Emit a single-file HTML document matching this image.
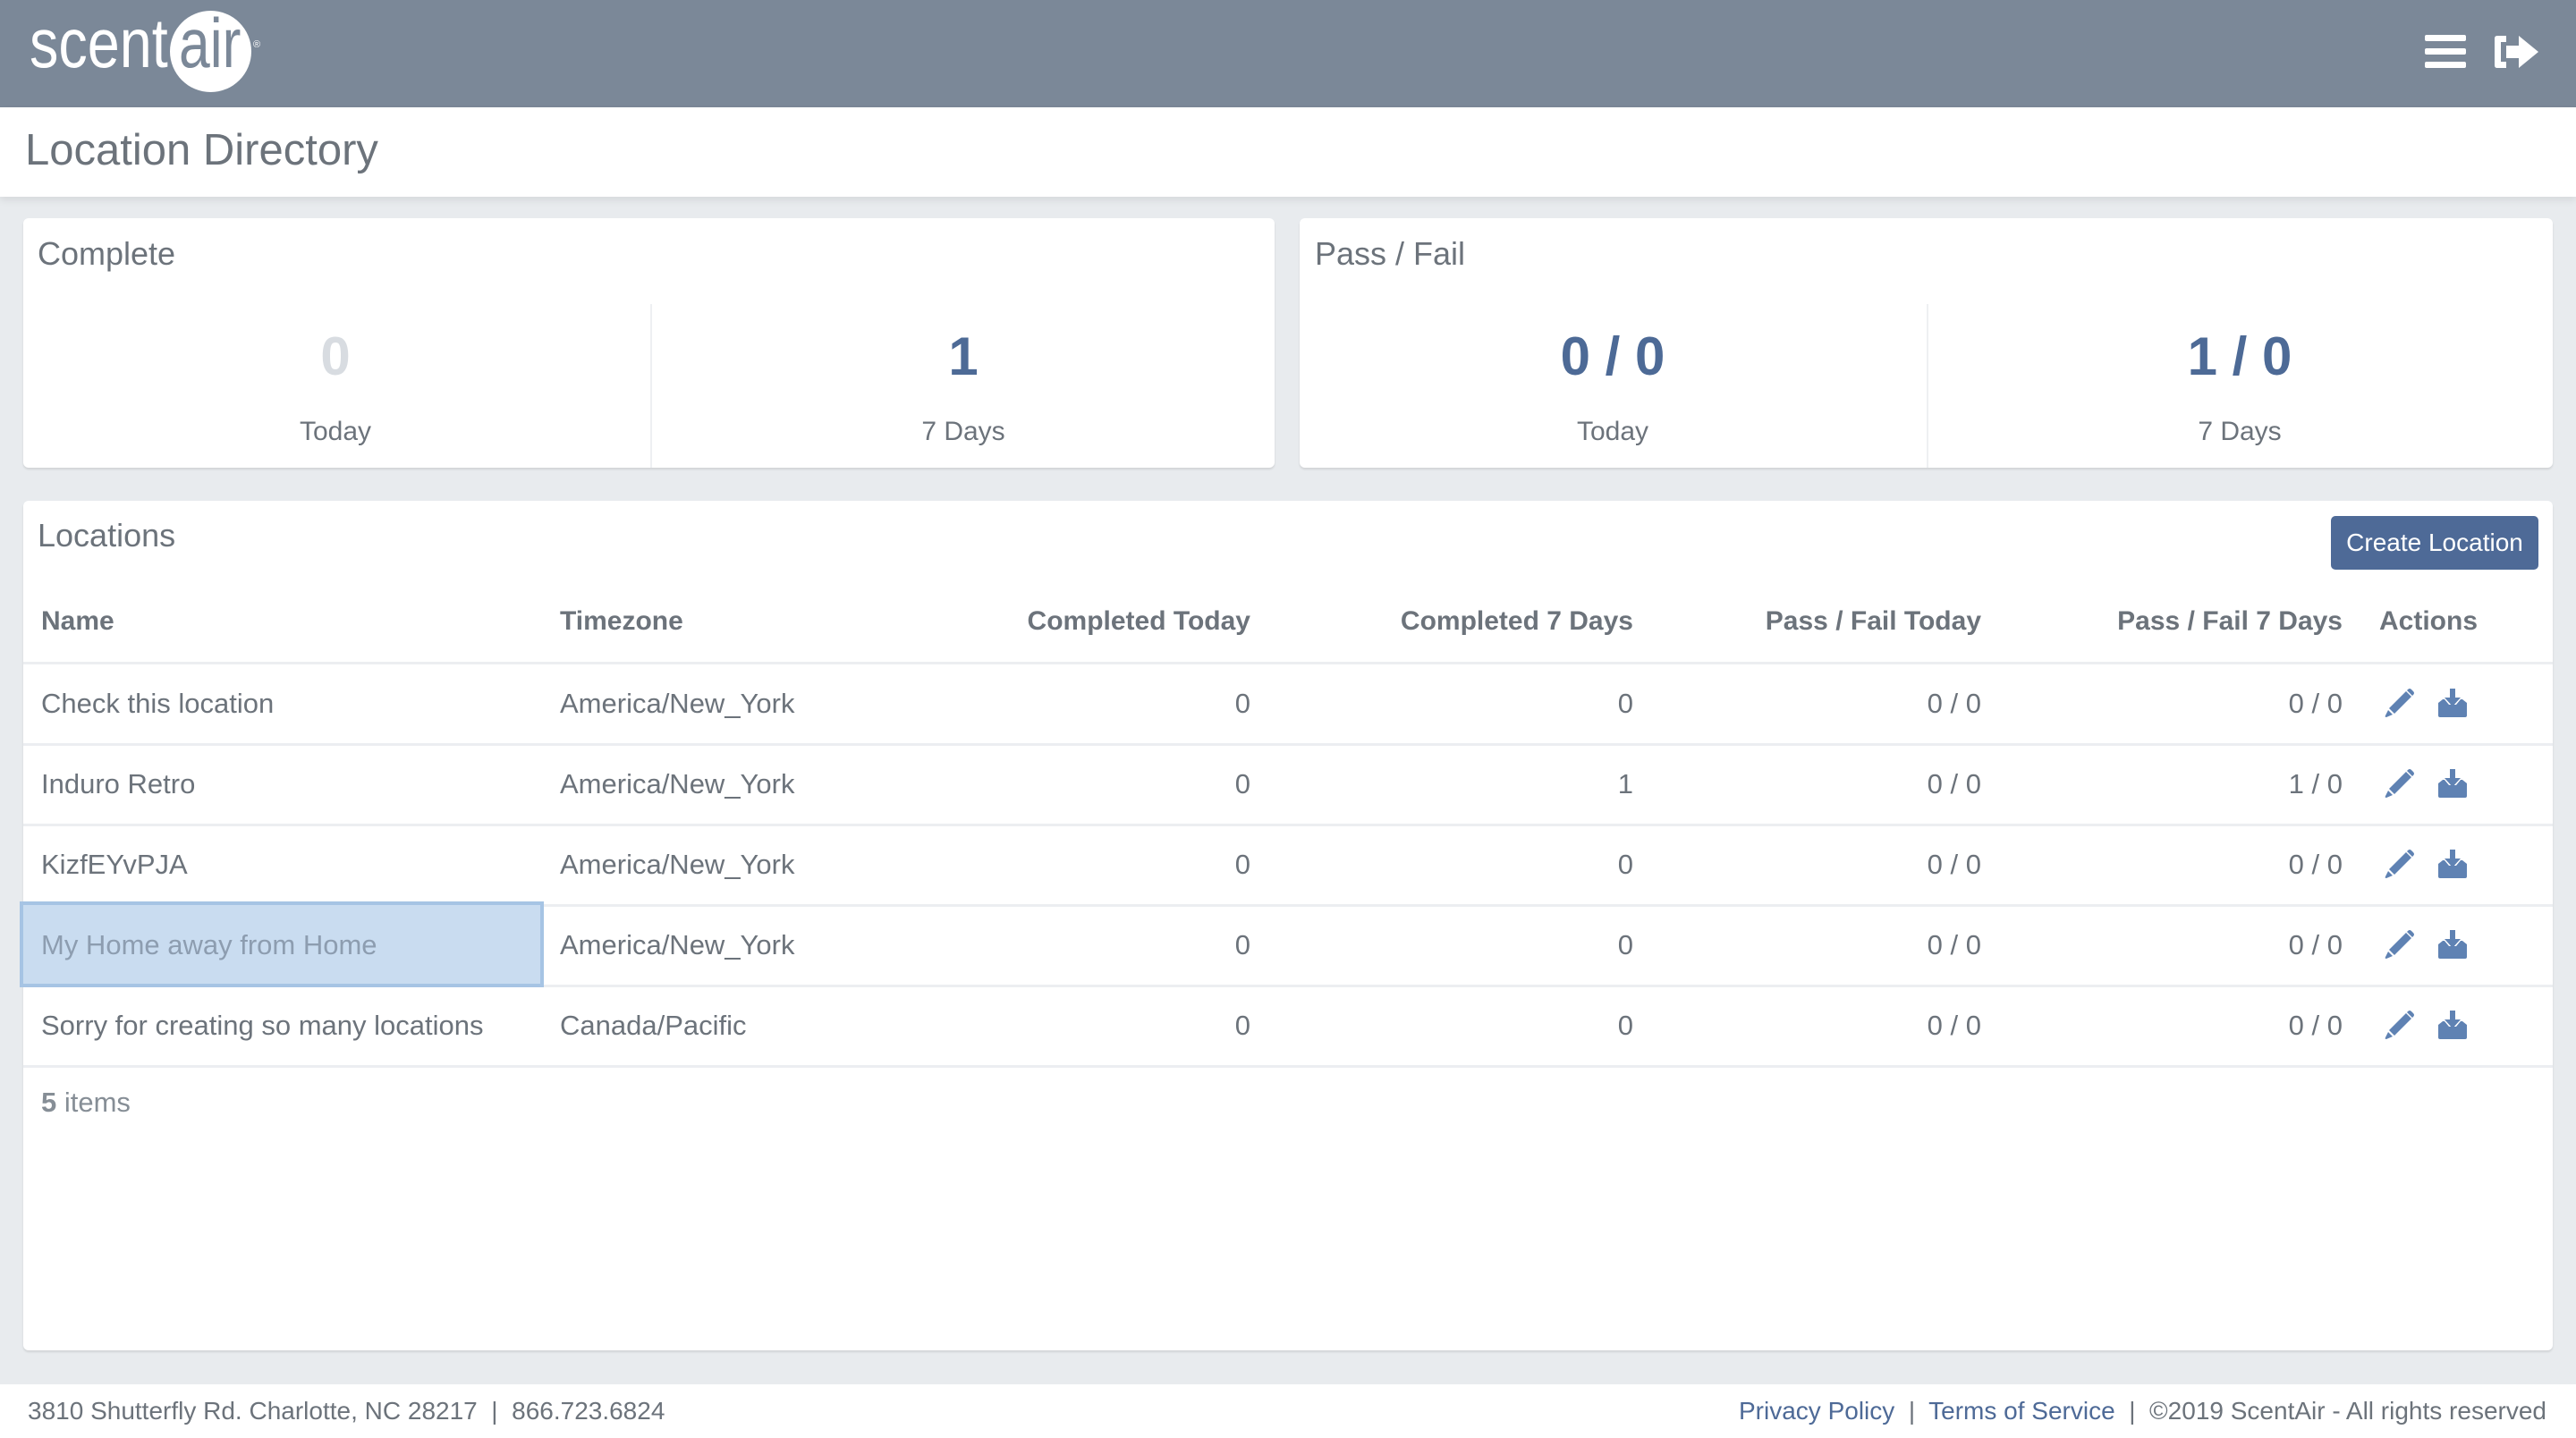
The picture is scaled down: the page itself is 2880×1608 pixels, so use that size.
<!DOCTYPE html>
<html><head><meta charset="utf-8"><style>
*{margin:0;padding:0;box-sizing:border-box}
body{width:2880px;height:1608px;background:#e8ebee;font-family:"Liberation Sans",sans-serif;color:#6c737b;position:relative;overflow:hidden}
.a{position:absolute;white-space:nowrap}
.hdr{left:0;top:0;width:2880px;height:120px;background:#7b8898}
.title{left:0;top:120px;width:2880px;height:100px;background:#fff;box-shadow:0 4px 8px rgba(0,0,0,0.08)}
.card{background:#fff;border-radius:6px;box-shadow:0 2px 2px rgba(0,0,0,0.1)}
.big{font-size:60px;font-weight:bold;color:#4d6a96;text-align:center;width:700px}
.lbl{font-size:30px;text-align:center;width:700px;color:#6c737b}
.th{font-size:30px;font-weight:bold;top:678px}
.td{font-size:31px}
.r{text-align:right}
.line{height:3px;background:#eceef1;left:26px;width:2828px}
</style></head><body>
<div class="a hdr"></div>
<div class="a" style="left:33px;top:9px;font-size:78px;line-height:78px;color:#fff;transform:scaleX(0.83);transform-origin:0 0">scent</div>
<div class="a" style="left:190px;top:12px;width:91px;height:91px;border-radius:50%;background:#fff"></div>
<div class="a" style="left:200px;top:9px;font-size:78px;line-height:78px;color:#7b8898;transform:scaleX(0.8);transform-origin:0 0">air</div>
<div class="a" style="left:283px;top:44px;font-size:11px;color:#fff">®</div>
<!-- hamburger -->
<div class="a" style="left:2711px;top:39px;width:46px;height:7px;background:#fff;border-radius:2px"></div>
<div class="a" style="left:2711px;top:54px;width:46px;height:7px;background:#fff;border-radius:2px"></div>
<div class="a" style="left:2711px;top:69px;width:46px;height:7px;background:#fff;border-radius:2px"></div>
<svg class="a" style="left:2786px;top:36px" width="54" height="44" viewBox="0 0 54 44"><path d="M16 4H6Q3 4 3 7V37Q3 40 6 40H16V33H10V11H16Z" fill="#fff"/><path d="M16 15H30V4L52 22L30 40V29H16Z" fill="#fff"/></svg>

<div class="a title"></div>
<div class="a" style="left:28px;top:140px;font-size:49px;color:#6c737b">Location Directory</div>

<div class="a card" style="left:26px;top:244px;width:1399px;height:279px"></div>
<div class="a" style="left:42px;top:263px;font-size:36px">Complete</div>
<div class="a" style="left:727px;top:340px;width:2px;height:183px;background:#eef0f2"></div>
<div class="a big" style="left:25px;top:364px;color:#d8dce1">0</div>
<div class="a big" style="left:727px;top:364px">1</div>
<div class="a lbl" style="left:25px;top:466px">Today</div>
<div class="a lbl" style="left:727px;top:466px">7 Days</div>

<div class="a card" style="left:1453px;top:244px;width:1401px;height:279px"></div>
<div class="a" style="left:1470px;top:263px;font-size:36px">Pass / Fail</div>
<div class="a" style="left:2154px;top:340px;width:2px;height:183px;background:#eef0f2"></div>
<div class="a big" style="left:1453px;top:364px">0 / 0</div>
<div class="a big" style="left:2154px;top:364px">1 / 0</div>
<div class="a lbl" style="left:1453px;top:466px">Today</div>
<div class="a lbl" style="left:2154px;top:466px">7 Days</div>

<div class="a card" style="left:26px;top:560px;width:2828px;height:950px"></div>
<div class="a" style="left:42px;top:578px;font-size:36px">Locations</div>
<div class="a" style="left:2606px;top:577px;width:232px;height:60px;background:#4e6a97;border-radius:5px;color:#fff;font-size:28px;line-height:60px;text-align:center">Create Location</div>

<div class="a th" style="left:46px">Name</div>
<div class="a th" style="left:626px">Timezone</div>
<div class="a th r" style="right:1482px">Completed Today</div>
<div class="a th r" style="right:1054px">Completed 7 Days</div>
<div class="a th r" style="right:665px">Pass / Fail Today</div>
<div class="a th r" style="right:261px">Pass / Fail 7 Days</div>
<div class="a th" style="left:2660px">Actions</div>
<div class="a line" style="top:740px"></div>

<div class="a" style="left:22px;top:1008px;width:586px;height:96px;background:#c9dcf0;border:4px solid #a6c4e4"></div>

<div class="a td" style="left:46px;top:769px">Check this location</div>
<div class="a td" style="left:626px;top:769px">America/New_York</div>
<div class="a td r" style="right:1482px;top:769px">0</div>
<div class="a td r" style="right:1054px;top:769px">0</div>
<div class="a td r" style="right:665px;top:769px">0 / 0</div>
<div class="a td r" style="right:261px;top:769px">0 / 0</div>
<div class="a line" style="top:831px"></div>

<div class="a td" style="left:46px;top:859px">Induro Retro</div>
<div class="a td" style="left:626px;top:859px">America/New_York</div>
<div class="a td r" style="right:1482px;top:859px">0</div>
<div class="a td r" style="right:1054px;top:859px">1</div>
<div class="a td r" style="right:665px;top:859px">0 / 0</div>
<div class="a td r" style="right:261px;top:859px">1 / 0</div>
<div class="a line" style="top:921px"></div>

<div class="a td" style="left:46px;top:949px">KizfEYvPJA</div>
<div class="a td" style="left:626px;top:949px">America/New_York</div>
<div class="a td r" style="right:1482px;top:949px">0</div>
<div class="a td r" style="right:1054px;top:949px">0</div>
<div class="a td r" style="right:665px;top:949px">0 / 0</div>
<div class="a td r" style="right:261px;top:949px">0 / 0</div>
<div class="a line" style="top:1011px;left:608px;width:2246px"></div>

<div class="a td" style="left:46px;top:1039px;color:#8d9db0">My Home away from Home</div>
<div class="a td" style="left:626px;top:1039px">America/New_York</div>
<div class="a td r" style="right:1482px;top:1039px">0</div>
<div class="a td r" style="right:1054px;top:1039px">0</div>
<div class="a td r" style="right:665px;top:1039px">0 / 0</div>
<div class="a td r" style="right:261px;top:1039px">0 / 0</div>
<div class="a line" style="top:1101px;left:608px;width:2246px"></div>

<div class="a td" style="left:46px;top:1129px">Sorry for creating so many locations</div>
<div class="a td" style="left:626px;top:1129px">Canada/Pacific</div>
<div class="a td r" style="right:1482px;top:1129px">0</div>
<div class="a td r" style="right:1054px;top:1129px">0</div>
<div class="a td r" style="right:665px;top:1129px">0 / 0</div>
<div class="a td r" style="right:261px;top:1129px">0 / 0</div>
<div class="a line" style="top:1191px"></div>

<div class="a td" style="left:46px;top:1215px;color:#868e96"><b>5</b> items</div>

<svg width="0" height="0" style="position:absolute"><defs>
<g id="pen"><path d="M25 3L31 9L12 28L6 22Z" fill="#5f82b3"/><path d="M27 1Q29 -1 31 1L33 3Q35 5 33 7L32 8L26 2Z" fill="#5f82b3"/><path d="M5 24L10 29L3 32Q1 32 2 30Z" fill="#5f82b3"/></g>
<g id="dl"><path d="M15 0H21V10H27L18 20L9 10H15Z" fill="#5f82b3"/><path d="M2 16L7 12H9L14 18H22L27 12H29L34 16V30Q34 32 32 32H4Q2 32 2 30Z" fill="#5f82b3"/></g>
</defs></svg>
<svg class="a" style="left:2665px;top:770px" width="36" height="34"><use href="#pen"/></svg>
<svg class="a" style="left:2724px;top:770px" width="36" height="34"><use href="#dl"/></svg>
<svg class="a" style="left:2665px;top:860px" width="36" height="34"><use href="#pen"/></svg>
<svg class="a" style="left:2724px;top:860px" width="36" height="34"><use href="#dl"/></svg>
<svg class="a" style="left:2665px;top:950px" width="36" height="34"><use href="#pen"/></svg>
<svg class="a" style="left:2724px;top:950px" width="36" height="34"><use href="#dl"/></svg>
<svg class="a" style="left:2665px;top:1040px" width="36" height="34"><use href="#pen"/></svg>
<svg class="a" style="left:2724px;top:1040px" width="36" height="34"><use href="#dl"/></svg>
<svg class="a" style="left:2665px;top:1130px" width="36" height="34"><use href="#pen"/></svg>
<svg class="a" style="left:2724px;top:1130px" width="36" height="34"><use href="#dl"/></svg>

<div class="a" style="left:0;top:1548px;width:2880px;height:60px;background:#fff"></div>
<div class="a" style="left:31px;top:1562px;font-size:28px;color:#6c737b">3810 Shutterfly Rd. Charlotte, NC 28217 &nbsp;|&nbsp; 866.723.6824</div>
<div class="a" style="right:33px;top:1562px;font-size:28px;color:#6c737b"><span style="color:#4e6a97">Privacy Policy</span> &nbsp;|&nbsp; <span style="color:#4e6a97">Terms of Service</span> &nbsp;|&nbsp; ©2019 ScentAir - All rights reserved</div>
</body></html>
